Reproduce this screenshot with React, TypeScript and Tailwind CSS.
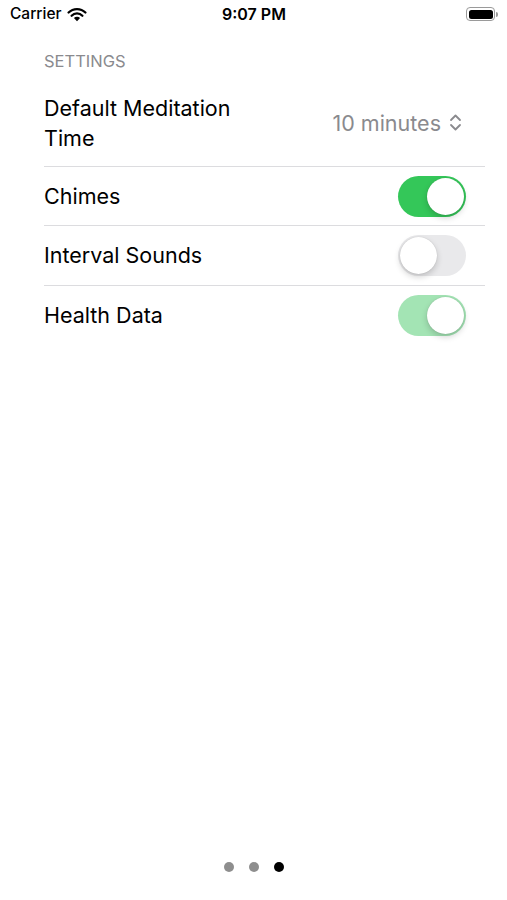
import { useState } from "react";

function Toggle({ on, dim }: { on: boolean; dim?: boolean }) {
  return (
    <div
      className={
        "relative h-[41px] w-[68px] rounded-full " +
        (on ? (dim ? "bg-[#a3e4b4]" : "bg-[#34c759]") : "bg-[#e9e9eb]")
      }
    >
      <div
        className={
          "absolute top-[2px] h-[37px] w-[37px] rounded-full bg-white shadow-[0_3px_6px_rgba(0,0,0,0.18),0_0_1px_rgba(0,0,0,0.2)] " +
          (on ? "left-[29px]" : "left-[2px]")
        }
      />
    </div>
  );
}

function StatusBar() {
  return (
    <div className="grid h-[28px] grid-cols-3 items-center pl-[10px] pr-[9px] text-[15.5px] text-black">
      <div className="flex items-center gap-[5px]">
        <span className="font-medium">Carrier</span>
        <svg width="20" height="15" viewBox="0 0 20 15">
          <path
            d="M10 14.2 L6.9 11 A4.4 4.4 0 0 1 13.1 11 Z"
            fill="black"
          />
          <path
            d="M4.6 8.7 A7.6 7.6 0 0 1 15.4 8.7"
            stroke="black"
            strokeWidth="2.3"
            fill="none"
            strokeLinecap="round"
          />
          <path
            d="M1.6 5.5 A11.9 11.9 0 0 1 18.4 5.5"
            stroke="black"
            strokeWidth="2.3"
            fill="none"
            strokeLinecap="round"
          />
        </svg>
      </div>
      <span className="text-center text-[16px] font-semibold">9:07 PM</span>
      <div className="flex items-center justify-end gap-[1px]">
        <div className="flex h-[14px] w-[29px] items-center rounded-[4px] border border-[#9a9a9a] p-[1.5px]">
          <div className="h-full w-full rounded-[2.5px] bg-black" />
        </div>
        <div className="h-[5px] w-[2px] rounded-r-sm bg-[#9a9a9a]" />
      </div>
    </div>
  );
}

export default function App() {
  const [settings] = useState([
    { label: "Chimes", on: true, dim: false },
    { label: "Interval Sounds", on: false, dim: false },
    { label: "Health Data", on: true, dim: true },
  ]);

  return (
    <div
      className="flex h-[900px] flex-col bg-white"
      style={{ fontFamily: "Inter, 'Liberation Sans', sans-serif" }}
    >
      <StatusBar />

      <div className="pl-[44px] pr-[22px]">
        <p className="mt-[21px] text-[16.5px] uppercase text-[#8a8a8e]">
          Settings
        </p>

        <div className="mt-[19px] flex items-center justify-between border-b border-[#dcdcdf] pb-[13px] pr-[23px]">
          <p className="text-[21.5px] leading-[30px] text-black">
            Default Meditation
            <br />
            Time
          </p>
          <div className="flex items-center gap-[8px] text-[21.5px] text-[#8a8a8e]">
            <span>10 minutes</span>
            <svg width="13" height="19" viewBox="0 0 13 19">
              <path
                d="M2 7 L6.5 2.5 L11 7 M2 12 L6.5 16.5 L11 12"
                stroke="#8a8a8e"
                strokeWidth="1.8"
                fill="none"
                strokeLinecap="round"
                strokeLinejoin="round"
              />
            </svg>
          </div>
        </div>

        {settings.map((item, index) => (
          <div
            key={item.label}
            className={
              "flex h-[59.5px] items-center justify-between pr-[19px] " +
              (index < settings.length - 1 ? "border-b border-[#dcdcdf]" : "")
            }
          >
            <span className="text-[21.5px] text-black">{item.label}</span>
            <Toggle on={item.on} dim={item.dim} />
          </div>
        ))}
      </div>

      <div className="flex-1" />

      <div className="mb-[28px] flex items-center justify-center gap-[15px]">
        <div className="h-[10px] w-[10px] rounded-full bg-[#8e8e8e]" />
        <div className="h-[10px] w-[10px] rounded-full bg-[#8e8e8e]" />
        <div className="h-[10px] w-[10px] rounded-full bg-black" />
      </div>
    </div>
  );
}
